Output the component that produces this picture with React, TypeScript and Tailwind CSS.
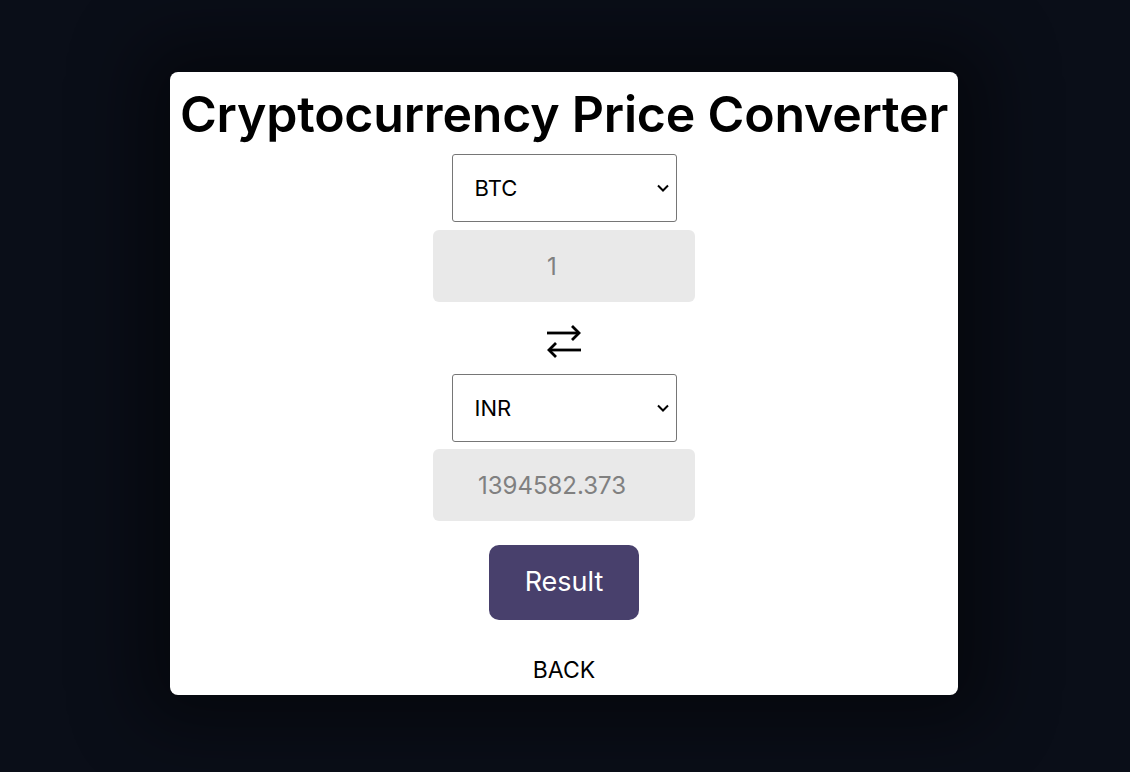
import React, { useState } from 'react';

function SwapIcon() {
  return (
    <svg width="38" height="36" viewBox="0 0 38 36" fill="none" stroke="#000" strokeWidth={2.8}>
      <path d="M2 10h32" />
      <path d="M27 3l7 7-7 7" />
      <path d="M36 27H4" />
      <path d="M11 20l-7 7 7 7" />
    </svg>
  );
}

function Chevron() {
  return (
    <svg className="pointer-events-none absolute right-[8px] top-1/2 -translate-y-1/2" width="12" height="8" viewBox="0 0 12 8" fill="none" stroke="#000" strokeWidth={2}>
      <path d="M1 1.5l5 5 5-5" />
    </svg>
  );
}

function CurrencySelect({ value, onChange, options, className }: { value: string; onChange: (v: string) => void; options: string[]; className?: string }) {
  return (
    <div className={`relative w-[225px] h-[68px] ${className ?? ''}`}>
      <select
        value={value}
        onChange={(e) => onChange(e.target.value)}
        className="appearance-none w-full h-full border border-[#767676] rounded-[3px] pl-[22px] pr-[30px] text-[22px] text-black bg-white outline-none"
      >
        {options.map((o) => (
          <option key={o}>{o}</option>
        ))}
      </select>
      <Chevron />
    </div>
  );
}

export default function App() {
  const [from, setFrom] = useState('BTC');
  const [to, setTo] = useState('INR');

  return (
    <div
      className="min-h-[772px] w-full bg-[#0a0e18] flex items-start justify-center pt-[72px]"
      style={{ fontFamily: 'Inter, "Noto Sans", sans-serif' }}
    >
      <div className="w-[788px] h-[623px] -ml-[2px] bg-white rounded-lg shadow-[0_0_70px_30px_rgba(0,0,0,0.45)] flex flex-col items-center">
        <h1 className="text-[50px] leading-[80px] font-semibold text-black tracking-[-0.2px] mt-[2px]">
          Cryptocurrency Price Converter
        </h1>

        <CurrencySelect value={from} onChange={setFrom} options={['BTC', 'ETH', 'LTC']} />

        <input
          type="text"
          readOnly
          value="1"
          className="mt-[8px] w-[262px] h-[72px] bg-[#e9e9e9] rounded-md text-center text-[24px] text-[#808080] pr-[24px] outline-none"
        />

        <div className="mt-[21px] h-[36px] flex items-center justify-center">
          <SwapIcon />
        </div>

        <CurrencySelect value={to} onChange={setTo} options={['INR', 'USD', 'EUR']} className="mt-[15px]" />

        <input
          type="text"
          readOnly
          value="1394582.373"
          className="mt-[7px] w-[262px] h-[72px] bg-[#e9e9e9] rounded-md text-center text-[24px] text-[#808080] pr-[24px] outline-none"
        />

        <button className="mt-[24px] w-[150px] h-[75px] bg-[#48406c] rounded-[10px] text-white text-[27px]">
          Result
        </button>

        <button className="mt-[33px] text-[23px] text-black">BACK</button>
      </div>
    </div>
  );
}
